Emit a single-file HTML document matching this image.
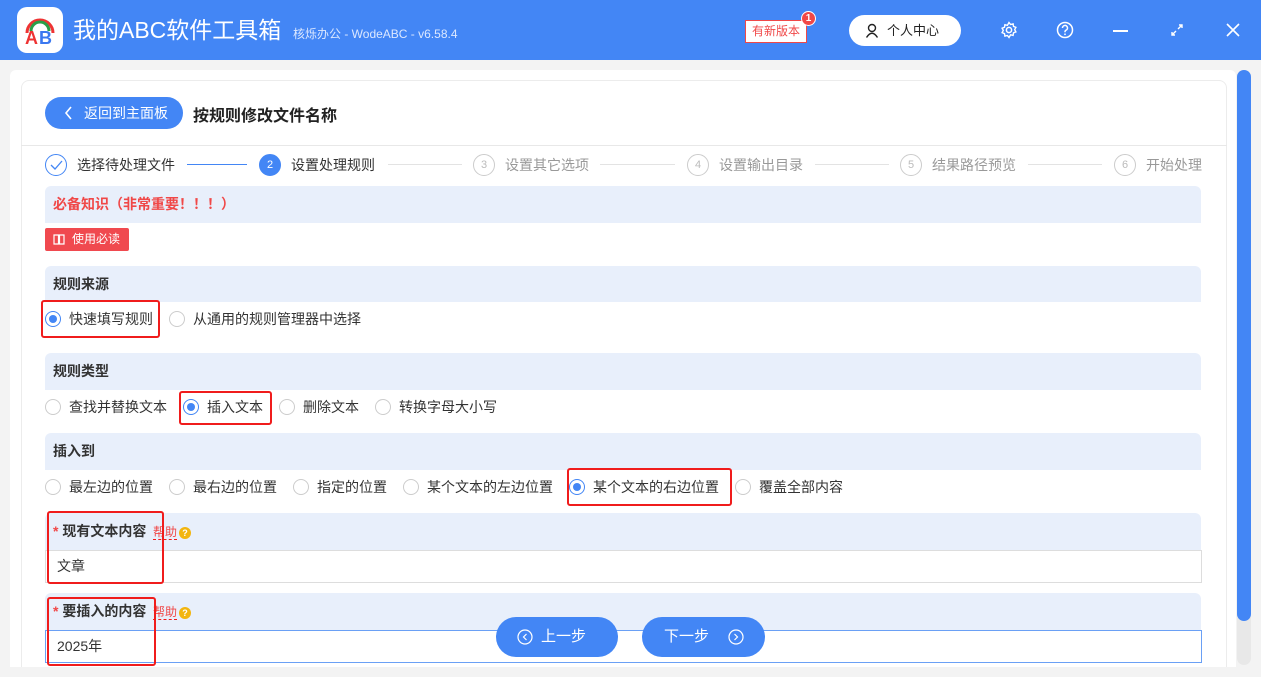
<!DOCTYPE html>
<html><head><meta charset="utf-8"><style>
*{margin:0;padding:0;box-sizing:border-box}
body{width:1261px;height:677px;overflow:hidden;background:#f3f3f3;font-family:"Liberation Sans","Noto Sans CJK SC",sans-serif;position:relative;font-size:14px;color:#333}
.a{position:absolute}
.hdr{left:0;top:0;width:1261px;height:60px;background:#4386f5}
.bar{position:absolute;left:45px;width:1156px;background:#e8effb;border-radius:6px 6px 0 0;font-weight:bold;font-size:14px;color:#333;padding-left:8px;white-space:nowrap}
.rad{position:absolute;width:16px;height:16px;border-radius:50%;border:1px solid #ccc;background:#fff}
.rad.on{border-color:#4386f5}
.rad.on::after{content:"";position:absolute;left:3px;top:3px;width:8px;height:8px;border-radius:50%;background:#4386f5}
.t{position:absolute;font-size:14px;line-height:16px;color:#333;white-space:nowrap}
.rb{position:absolute;border:2px solid #f01c1c;border-radius:3px}
.step{position:absolute;top:154px;width:22px;height:22px;border-radius:50%;border:1px solid #ccc;color:#bbb;font-size:11px;text-align:center;line-height:20px}
.sl{position:absolute;top:164px;height:1px;background:#e3e3e3}
.st{position:absolute;top:157px;font-size:14px;line-height:16px;color:#999;white-space:nowrap}
.help{position:absolute;color:#f04848;font-size:12px;border-bottom:1px dashed #f01c1c;line-height:14px}
.q{position:absolute;width:12px;height:12px;border-radius:50%;background:#f2b50f;color:#fff;font-size:9px;font-weight:bold;text-align:center;line-height:12px}
</style></head><body>
<div class="a hdr"></div>
<div class="a" style="left:17px;top:7px;width:46px;height:46px;background:#fff;border-radius:10px">
<svg width="46" height="46" viewBox="0 0 46 46"><path d="M10 26 A13 13 0 0 1 36 26" fill="none" stroke="#e33" stroke-width="3"/><path d="M14 24 A9 9 0 0 1 32 24" fill="none" stroke="#2b9e48" stroke-width="3"/><text x="8" y="37" font-size="18" font-weight="bold" fill="#e33" font-family="Liberation Sans">A</text><text x="22" y="37" font-size="18" font-weight="bold" fill="#3a78f0" font-family="Liberation Sans">B</text></svg></div>
<div class="a" style="left:73px;top:15px;font-size:23px;line-height:30px;color:#fff;white-space:nowrap">我的ABC软件工具箱</div>
<div class="a" style="left:293px;top:25px;font-size:12px;color:#dce8ff">核烁办公 - WodeABC - v6.58.4</div>
<div class="a" style="left:745px;top:20px;width:62px;height:23px;background:#fff;border:1px solid #f04848;color:#f04848;font-size:12px;text-align:center;line-height:21px">有新版本</div>
<div class="a" style="left:801px;top:11px;width:15px;height:15px;border-radius:50%;background:#f04848;border:1px solid #fff;color:#fff;font-size:10px;font-weight:bold;text-align:center;line-height:13px">1</div>
<div class="a" style="left:849px;top:15px;width:112px;height:31px;background:#fff;border-radius:16px;font-size:13px;color:#222;line-height:31px;padding-left:38px">个人中心</div>
<svg class="a" style="left:865px;top:23px" width="14" height="15" viewBox="0 0 14 15"><circle cx="7" cy="5" r="3.5" fill="none" stroke="#222" stroke-width="1.4"/><path d="M1.5 14.5 Q7 6 12.5 14.5" fill="none" stroke="#222" stroke-width="1.4"/></svg>
<svg class="a" style="left:1000px;top:21px" width="18" height="18" viewBox="0 0 18 18"><circle cx="9" cy="9" r="2.6" fill="none" stroke="#fff" stroke-width="1.5"/><path d="M9 1.5l1.6 2 2.5-.6.4 2.5 2.4 1-1.2 2.2 1.2 2.3-2.4 1-.4 2.5-2.5-.6L9 16.5l-1.6-2-2.5.6-.4-2.5-2.4-1L3.3 9.4 2.1 7.2l2.4-1 .4-2.5 2.5.6z" fill="none" stroke="#fff" stroke-width="1.4"/></svg>
<svg class="a" style="left:1056px;top:21px" width="18" height="18" viewBox="0 0 18 18"><circle cx="9" cy="9" r="7.5" fill="none" stroke="#fff" stroke-width="1.5"/><path d="M6.5 7a2.5 2.5 0 1 1 3.3 2.3c-.6.3-.8.7-.8 1.4v.6" fill="none" stroke="#fff" stroke-width="1.5"/><circle cx="9" cy="13.3" r=".9" fill="#fff"/></svg>
<div class="a" style="left:1113px;top:30px;width:15px;height:2px;background:#fff"></div>
<svg class="a" style="left:1170px;top:23px" width="14" height="14" viewBox="0 0 14 14"><path d="M8 6L12 2M9 2h3v3M6 8L2 12M2 9v3h3" fill="none" stroke="#fff" stroke-width="1.4"/></svg>
<svg class="a" style="left:1226px;top:23px" width="14" height="14" viewBox="0 0 14 14"><path d="M1 1L13 13M13 1L1 13" stroke="#fff" stroke-width="1.6"/></svg>

<div class="a" style="left:10px;top:70px;width:1226px;height:607px;background:#fff;border-radius:6px"></div>
<div class="a" style="left:21px;top:80px;width:1206px;height:597px;background:#fff;border:1px solid #ececec;border-radius:8px"></div>
<div class="a" style="left:21px;top:145px;width:1206px;height:1px;background:#e8e8e8"></div>
<div class="a" style="left:1237px;top:70px;width:14px;height:595px;background:#e8e8e8;border-radius:7px"></div>
<div class="a" style="left:1237px;top:70px;width:14px;height:551px;background:#4386f5;border-radius:7px"></div>

<div class="a" style="left:45px;top:97px;width:138px;height:32px;background:#4386f5;border-radius:16px;color:#fff;font-size:14px;line-height:32px;padding-left:39px;white-space:nowrap">返回到主面板</div>
<svg class="a" style="left:64px;top:106px" width="9" height="14" viewBox="0 0 9 14"><path d="M7 1L2 7l5 6" fill="none" stroke="#fff" stroke-width="1.6"/></svg>
<div class="a" style="left:193px;top:102px;font-size:16px;font-weight:bold;color:#222">按规则修改文件名称</div>

<div class="step" style="left:45px;border-color:#4386f5"><svg width="20" height="20" viewBox="0 0 20 20"><path d="M5 10l4 4 7-8" fill="none" stroke="#4386f5" stroke-width="1.3"/></svg></div>
<div class="st" style="left:77px;color:#333">选择待处理文件</div>
<div class="sl" style="left:187px;width:60px;background:#4386f5"></div>
<div class="step" style="left:259px;background:#4386f5;border-color:#4386f5;color:#fff">2</div>
<div class="st" style="left:291px;color:#333">设置处理规则</div>
<div class="sl" style="left:388px;width:74px"></div>
<div class="step" style="left:473px">3</div><div class="st" style="left:505px">设置其它选项</div>
<div class="sl" style="left:600px;width:75px"></div>
<div class="step" style="left:687px">4</div><div class="st" style="left:719px">设置输出目录</div>
<div class="sl" style="left:815px;width:74px"></div>
<div class="step" style="left:900px">5</div><div class="st" style="left:932px">结果路径预览</div>
<div class="sl" style="left:1028px;width:74px"></div>
<div class="step" style="left:1114px">6</div><div class="st" style="left:1146px">开始处理</div>

<div class="bar" style="top:186px;height:37px;line-height:37px;color:#f04848">必备知识（非常重要！！！）</div>
<div class="a" style="left:45px;top:228px;width:84px;height:23px;background:#f0494f;border-radius:2px;color:#fff;font-size:12px;line-height:23px;padding-left:27px">使用必读</div>
<svg class="a" style="left:53px;top:234px" width="12" height="11" viewBox="0 0 12 11"><path d="M1 1h4.5v9H1zM6.5 1H11v9H6.5z" fill="none" stroke="#fff" stroke-width="1.2"/></svg>

<div class="bar" style="top:266px;height:36px;line-height:36px">规则来源</div>
<div class="rad on" style="left:45px;top:311px"></div><div class="t" style="left:69px;top:311px">快速填写规则</div>
<div class="rad" style="left:169px;top:311px"></div><div class="t" style="left:193px;top:311px">从通用的规则管理器中选择</div>
<div class="rb" style="left:41px;top:300px;width:119px;height:38px"></div>

<div class="bar" style="top:353px;height:37px;line-height:37px">规则类型</div>
<div class="rad" style="left:45px;top:399px"></div><div class="t" style="left:69px;top:399px">查找并替换文本</div>
<div class="rad on" style="left:183px;top:399px"></div><div class="t" style="left:207px;top:399px">插入文本</div>
<div class="rad" style="left:279px;top:399px"></div><div class="t" style="left:303px;top:399px">删除文本</div>
<div class="rad" style="left:375px;top:399px"></div><div class="t" style="left:399px;top:399px">转换字母大小写</div>
<div class="rb" style="left:179px;top:391px;width:93px;height:34px"></div>

<div class="bar" style="top:433px;height:37px;line-height:37px">插入到</div>
<div class="rad" style="left:45px;top:479px"></div><div class="t" style="left:69px;top:479px">最左边的位置</div>
<div class="rad" style="left:169px;top:479px"></div><div class="t" style="left:193px;top:479px">最右边的位置</div>
<div class="rad" style="left:293px;top:479px"></div><div class="t" style="left:317px;top:479px">指定的位置</div>
<div class="rad" style="left:403px;top:479px"></div><div class="t" style="left:427px;top:479px">某个文本的左边位置</div>
<div class="rad on" style="left:569px;top:479px"></div><div class="t" style="left:593px;top:479px">某个文本的右边位置</div>
<div class="rad" style="left:735px;top:479px"></div><div class="t" style="left:759px;top:479px">覆盖全部内容</div>
<div class="rb" style="left:567px;top:468px;width:165px;height:38px"></div>

<div class="bar" style="top:513px;height:37px;line-height:37px"><span style="color:#f04848">*</span> 现有文本内容</div>
<div class="help" style="left:153px;top:525px">帮助</div><div class="q" style="left:179px;top:527px">?</div>
<div class="a" style="left:45px;top:550px;width:1157px;height:33px;border:1px solid #ddd;background:#fff;padding-left:11px;line-height:31px;font-size:14px">文章</div>
<div class="rb" style="left:47px;top:511px;width:117px;height:73px"></div>

<div class="bar" style="top:593px;height:37px;line-height:37px"><span style="color:#f04848">*</span> 要插入的内容</div>
<div class="help" style="left:153px;top:605px">帮助</div><div class="q" style="left:179px;top:607px">?</div>
<div class="a" style="left:45px;top:630px;width:1157px;height:33px;border:1px solid #6aa0f5;background:#fff;padding-left:11px;line-height:31px;font-size:14px">2025年</div>
<div class="rb" style="left:47px;top:597px;width:109px;height:69px"></div>

<div class="a" style="left:496px;top:617px;width:122px;height:40px;background:#4386f5;border-radius:20px;color:#fff;font-size:15px;line-height:40px;padding-left:45px;white-space:nowrap">上一步</div>
<svg class="a" style="left:517px;top:629px" width="16" height="16" viewBox="0 0 16 16"><circle cx="8" cy="8" r="7" fill="none" stroke="#fff" stroke-width="1.2"/><path d="M9.5 5L6.5 8l3 3" fill="none" stroke="#fff" stroke-width="1.2"/></svg>
<div class="a" style="left:642px;top:617px;width:123px;height:40px;background:#4386f5;border-radius:20px;color:#fff;font-size:15px;line-height:40px;padding-left:22px;white-space:nowrap">下一步</div>
<svg class="a" style="left:728px;top:629px" width="16" height="16" viewBox="0 0 16 16"><circle cx="8" cy="8" r="7" fill="none" stroke="#fff" stroke-width="1.2"/><path d="M6.5 5l3 3-3 3" fill="none" stroke="#fff" stroke-width="1.2"/></svg>
<div class="a" style="left:0;top:667px;width:1261px;height:10px;background:#f3f3f3"></div>
</body></html>
